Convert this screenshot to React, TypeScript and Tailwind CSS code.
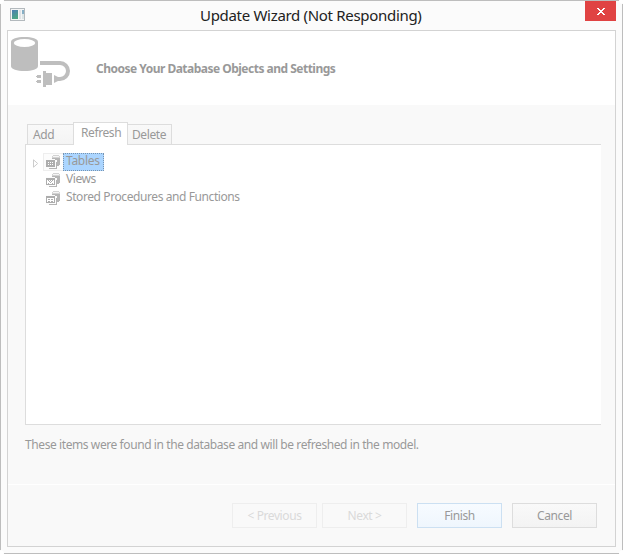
import React from 'react';

const WindowIcon: React.FC = () => (
  <svg className="block" width="15" height="13" viewBox="0 0 15 13" shapeRendering="crispEdges">
    <defs>
      <linearGradient id="pane" x1="0" y1="0" x2="0.4" y2="1">
        <stop offset="0" stopColor="#4c7db4" />
        <stop offset="1" stopColor="#4ba585" />
      </linearGradient>
    </defs>
    <rect width="15" height="13" fill="#b3b9bd" />
    <rect x="1" y="1" width="13" height="11" fill="#f4f5f5" />
    <rect x="2" y="2" width="6" height="9" fill="url(#pane)" />
    <rect x="9" y="2" width="2" height="9" fill="#dfe3e6" />
    <rect x="12" y="2" width="2" height="4" fill="#86afc6" />
    <rect x="12" y="6" width="2" height="5" fill="#dce5e6" />
  </svg>
);

const DatabasePlugIcon: React.FC = () => (
  <svg className="block" width="63" height="52" viewBox="0 0 63 52">
    <path d="M3 6C3 2.800 9 1 16.500 1S30 2.800 30 6V30C30 33.500 24 35 16.500 35S3 33.500 3 30Z" fill="#bebebe" />
    <ellipse cx="16.500" cy="7" rx="10.700" ry="4" fill="#fff" />
    <path d="M32 27H52A8 8 0 0 1 52 43H48" fill="none" stroke="#bebebe" strokeWidth="4" />
    <path d="M46 39L50 41V45L46 47Z" fill="#bebebe" />
    <path d="M35 35H38V37H44V49H38V51H35Z" fill="#bebebe" />
    <path d="M29 39H33V42H29ZM29 44H33V47H29ZM28 40H29V41H28ZM28 45H29V46H28Z" fill="#bebebe" />
  </svg>
);

type Kind = 'tables' | 'views' | 'procedures';

const marks: Record<Kind, string> = {
  tables: 'M2 7h1v1H2zM4 7h1v1H4zM6 7h1v1H6zM2 9h1v1H2zM4 9h1v1H4zM6 9h1v1H6z',
  views: 'M2 7h1v1H2zM6 7h1v1H6zM3 8h1v1H3zM5 8h1v1H5zM4 7h1v1H4zM4 9h1v1H4zM2 10h1v1H2zM6 10h1v1H6z',
  procedures: 'M2 8h2v1H2zM5 8h2v1H5zM2 10h2v1H2zM5 10h2v1H5z',
};

const NodeIcon: React.FC<{ kind: Kind }> = ({ kind }) => (
  <svg className="block" width="14" height="14" viewBox="0 0 14 14" shapeRendering="crispEdges">
    <path d="M6 1h1V0h6v1h1v2H6z" fill="#d3d3d3" />
    <path d="M7 1h6v1H7z" fill="#f6f6f6" />
    <path d="M6 3h8v7h-1v1H6z" fill="#b6b6b6" />
    <path d="M0 4h9v10H0zM9 5h2v9H9z" fill="#fcfcfc" />
    <path d="M0 5h9v7H0z" fill="#adadad" />
    {kind !== 'tables' && <path d="M1 7h7v4H1z" fill="#fff" />}
    <path d={marks[kind]} fill={kind === 'tables' ? '#fff' : '#adadad'} />
    <path d="M10 7h1v7H3v-1h7z" fill="#b4b4b4" />
  </svg>
);

const nodes: { label: string; kind: Kind }[] = [
  { label: 'Tables', kind: 'tables' },
  { label: 'Views', kind: 'views' },
  { label: 'Stored Procedures and Functions', kind: 'procedures' },
];

const buttons = [
  { label: '< Previous', className: 'border-[#eeeeee] text-[#dadada]' },
  { label: 'Next >', className: 'border-[#eeeeee] text-[#dadada]' },
  { label: 'Finish', className: 'ml-[5px] border-[#cce0f2] bg-linear-to-b from-[#f7fbff] to-[#eff6fd] text-[#999]' },
  { label: 'Cancel', className: 'ml-[5px] border-[#dddddd] bg-linear-to-b from-[#f9f9f9] to-[#f3f3f3] text-[#999]' },
];

const App: React.FC = () => {
  return (
    <div className="relative h-[554px] w-[623px] bg-white font-['Noto_Sans','Open_Sans',sans-serif] text-[12px] tracking-[-0.41px] text-[#999]">
      <div className="flex h-full flex-col border border-[#bdbdbd] bg-[#fbfbfb] px-[6px] pb-[6px]">
        <div className="flex h-[29px] shrink-0 items-start">
          <div className="w-[31px] pt-[7px] pl-[3px]">
            <WindowIcon />
          </div>
          <h1 className="flex-1 pl-[162px] text-[15px] leading-[29px] tracking-[-0.31px] whitespace-nowrap text-[#222]">
            <span>Update Wizard (Not Responding)</span>
          </h1>
          <button className="flex h-[20px] w-[31px] items-center justify-center bg-[#e04343]" aria-label="Close">
            <svg width="8" height="7" viewBox="0 0 8 7" shapeRendering="crispEdges">
              <path d="M0 0h2v1h1v1h2V1h1V0h2v1H7v1H6v1H5v1h1v1h1v1h1v1H6V6H5V5H3v1H2v1H0V6h1V5h1V4h1V3H2V2H1V1H0z" fill="#fff" />
            </svg>
          </button>
        </div>

        <div className="flex flex-1 flex-col border border-[#d3d3d3] bg-[#f9f9f9]">
          <header className="flex h-[74px] shrink-0 items-start bg-white">
            <div className="pt-[5px]">
              <DatabasePlugIcon />
            </div>
            <h2 className="pt-[29px] pl-[25px] leading-[18px] font-bold tracking-[-0.51px] whitespace-nowrap">
              <span>Choose Your Database Objects and Settings</span>
            </h2>
          </header>

          <main className="flex h-[379px] shrink-0 flex-col pt-[17px] pr-[14px] pl-[17px]">
            <div className="z-10 -mb-px ml-[2px] flex h-[23px] items-end leading-[20px]">
              <div className="mb-px h-[20px] w-[46px] border border-r-0 border-b-0 border-[#dddddd] bg-linear-to-b from-[#f9f9f9] to-[#f4f4f4] pl-[5px]">
                <span>Add</span>
              </div>
              <div className="h-[23px] w-[55px] border border-b-0 border-[#dddddd] bg-white pl-[7px]">
                <span>Refresh</span>
              </div>
              <div className="mb-px h-[20px] w-[44px] border border-b-0 border-l-0 border-[#dddddd] bg-linear-to-b from-[#f9f9f9] to-[#f4f4f4] pl-[4px]">
                <span>Delete</span>
              </div>
            </div>
            <div className="h-[281px] border border-r-0 border-[#dddddd] bg-white pt-[8px] pl-[7px]">
              {nodes.map((node, i) => (
                <div key={node.label} className="flex h-[18px] items-start whitespace-nowrap">
                  <div className="w-[10px] pt-[6px]">
                    {i === 0 && (
                      <svg className="block" width="6" height="9" viewBox="0 0 6 9">
                        <path d="M.5.8V8.200L4.700 4.500Z" fill="#fff" stroke="#ccc" />
                      </svg>
                    )}
                  </div>
                  <div className={i === 0 ? 'h-[18px] w-[20px] border border-r-0 border-[#eeeeee] bg-[#fcfcfc] pt-px pl-[2px]' : 'h-[18px] w-[20px] pt-[2px] pl-[3px]'}>
                    <NodeIcon kind={node.kind} />
                  </div>
                  <div className={i === 0 ? 'h-[18px] w-[41px] border border-dotted border-[#7894b0] bg-[#abd5ff] pl-[2px] leading-[14px]' : 'pl-[3px] leading-[16px]'}>
                    <span className={i === 0 ? 'tracking-[-0.3px]' : ''}>{node.label}</span>
                  </div>
                </div>
              ))}
            </div>
            <p className="pt-[11px] leading-[18px] whitespace-nowrap">
              <span>These items were found in the database and will be refreshed in the model.</span>
            </p>
          </main>

          <footer className="flex flex-1 gap-[5px] border-t border-white pt-[18px] pl-[224px]">
            {buttons.map((button) => (
              <button key={button.label} className={`h-[25px] w-[85px] shrink-0 border leading-[23px] ${button.className}`}>
                {button.label}
              </button>
            ))}
          </footer>
        </div>
      </div>

      {/* notched window corners */}
      <i className="absolute top-0 left-0 h-[4px] w-[4px] rounded-br-[4px] bg-white" />
      <i className="absolute top-0 right-0 h-[4px] w-[4px] rounded-bl-[4px] bg-white" />
      <i className="absolute bottom-0 left-0 h-[4px] w-[4px] rounded-tr-[4px] bg-white" />
      <i className="absolute right-0 bottom-0 h-[4px] w-[4px] rounded-tl-[4px] bg-white" />
    </div>
  );
};

export default App;
